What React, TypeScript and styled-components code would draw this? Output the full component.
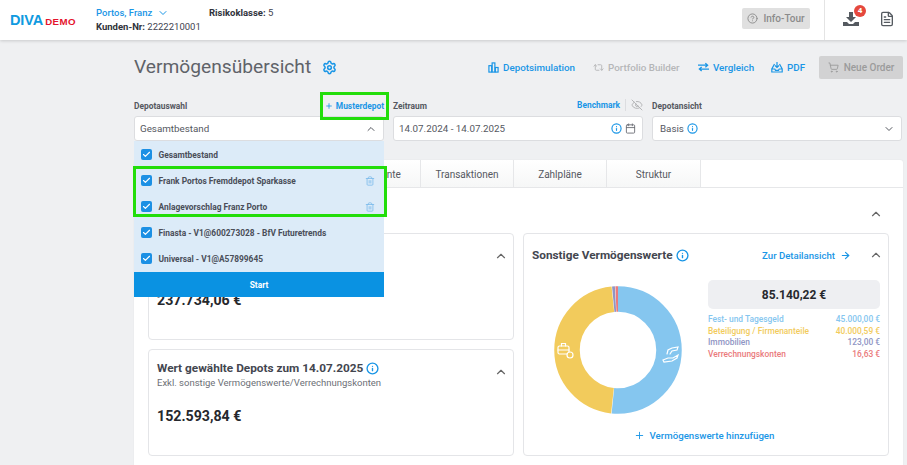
import { createGlobalStyle, styled } from "styled-components"
import { ArrowRight, Calendar, Check, ChevronDown, ChevronUp, CircleHelp, EyeOff, FileText, Info, Plus, Repeat2, Settings, ShoppingCart, Trash2 } from "lucide-react"

const blue = "#1a96e6"
const green = "#22dd0a"

const Global = createGlobalStyle`
  html, body { margin: 0; padding: 0; height: 100%; overflow: hidden; background: #eff0f2; }
  body { font-family: Roboto, "Liberation Sans", sans-serif; color: #3f4350; }
  * { box-sizing: border-box; }
`

const Page = styled.div`
  width: 907px;
  height: 465px;
  overflow: hidden;
`

const Header = styled.header`
  height: 40px;
  background: #fff;
  box-shadow: 0 1px 3px rgba(0, 0, 0, 0.16);
  display: flex;
  align-items: stretch;
  padding-left: 10px;
`

const Logo = styled.div`
  width: 86px;
  display: flex;
  align-items: baseline;
  padding-top: 12px;
  font-family: "Liberation Sans", sans-serif;
  font-weight: 700;
`

const LogoBlue = styled.span`
  color: #0f9ae0;
  font-size: 14.5px;
  letter-spacing: -0.1px;
`

const LogoRed = styled.span`
  color: #e4132c;
  font-size: 9.7px;
  letter-spacing: 0.4px;
  margin-left: 2px;
`

const Client = styled.div`
  width: 113px;
  padding-top: 6px;
  font-size: 9.5px;
  line-height: 13.5px;
  white-space: nowrap;
`

const ClientName = styled.div`
  display: flex;
  align-items: center;
  gap: 5px;
  color: ${blue};
  font-weight: 500;
`

const Strong = styled.span`
  font-weight: 700;
  color: #30333b;
`

const Risk = styled.div`
  padding-top: 6px;
  font-size: 9.5px;
  line-height: 13.5px;
`

const HeaderRight = styled.div`
  margin-left: auto;
  display: flex;
  align-items: stretch;
`

const TourButton = styled.div`
  align-self: center;
  margin: -3px 14px 0 0;
  width: 68px;
  height: 21px;
  background: #e0e0e0;
  border-radius: 2px;
  display: flex;
  align-items: center;
  justify-content: center;
  gap: 5px;
  color: #8b8b8b;
  font-size: 10px;
  font-weight: 500;
`

const HeaderIcons = styled.div`
  width: 83px;
  border-left: 1px solid #e4e4e4;
  display: flex;
  align-items: flex-start;
  gap: 20px;
  padding: 11px 0 0 18px;
`

const DownloadWrap = styled.div`
  position: relative;
  width: 16px;
  height: 16px;
`

const Badge = styled.span`
  position: absolute;
  top: -6px;
  left: 11px;
  width: 12px;
  height: 12px;
  border-radius: 50%;
  background: #e5483d;
  color: #fff;
  font-size: 8px;
  font-weight: 700;
  line-height: 12px;
  text-align: center;
`

const Main = styled.main`
  margin-left: 134px;
  width: 769px;
`

const TitleRow = styled.div`
  height: 50px;
  display: flex;
  align-items: center;
  padding-top: 4px;
`

const Title = styled.h1`
  margin: -2px 0 0;
  font-size: 19.2px;
  font-weight: 400;
  color: #5f6369;
`

const TitleIcon = styled.span`
  display: flex;
  margin-left: 11px;
  color: ${blue};
`

const Actions = styled.div`
  margin-left: auto;
  display: flex;
  align-items: center;
`

const Action = styled.div<{ $off?: boolean; $w: number }>`
  width: ${(p) => p.$w}px;
  display: flex;
  align-items: center;
  gap: 4px;
  color: ${(p) => (p.$off ? "#b5b6b8" : blue)};
  font-size: 9.8px;
  font-weight: 500;
  white-space: nowrap;
`

const OrderButton = styled.div`
  width: 84px;
  height: 23px;
  border-radius: 2px;
  background: #d2d2d3;
  color: #9b9b9b;
  display: flex;
  align-items: center;
  justify-content: center;
  gap: 5px;
  font-size: 10px;
  font-weight: 500;
`

const Fields = styled.div`
  display: grid;
  grid-template-columns: 250px 250px 250px;
  column-gap: 9px;
  position: relative;
  z-index: 2;
`

const Field = styled.div`
  position: relative;
`

const LabelRow = styled.div`
  height: 26px;
  padding-bottom: 5px;
  display: flex;
  align-items: flex-end;
  justify-content: space-between;
  font-size: 8.4px;
  font-weight: 700;
  color: #55585f;
`

const AddLink = styled.span`
  position: relative;
  display: flex;
  align-items: center;
  gap: 3px;
  color: ${blue};

  &::after {
    content: "";
    position: absolute;
    top: -9px;
    bottom: -9px;
    left: -5px;
    right: -5px;
    border: 3px solid ${green};
  }
`

const BenchmarkGroup = styled.span`
  display: flex;
  align-items: center;
  gap: 5px;
  color: ${blue};
`

const Divider = styled.span`
  width: 1px;
  height: 12px;
  background: #dcdde0;
`

const Input = styled.div<{ $pad?: number }>`
  height: 25px;
  background: #fff;
  border: 1px solid #dcdde0;
  border-radius: 3px;
  display: flex;
  align-items: center;
  padding: 0 6px 0 ${(p) => p.$pad ?? 5}px;
  font-size: 9.8px;
  color: #55585f;
  gap: 3px;
`

const PushRight = styled.span`
  margin-left: auto;
  display: flex;
  align-items: center;
  gap: 3px;
`

const Dropdown = styled.div`
  position: absolute;
  top: 51px;
  left: 0;
  width: 250px;
  background: #dcebf8;
`

const Highlighted = styled.div`
  position: relative;

  &::after {
    content: "";
    position: absolute;
    top: -1px;
    bottom: 2px;
    left: -1px;
    right: -3px;
    border: 3px solid ${green};
    pointer-events: none;
  }
`

const Option = styled.div`
  height: 26px;
  display: flex;
  align-items: center;
  padding: 1px 8px 0 7px;
  gap: 6.5px;
  font-size: 8.4px;
  font-weight: 700;
  color: #4a4e58;
`

const Box = styled.span`
  width: 11px;
  height: 11px;
  border-radius: 2px;
  background: #1c90e4;
  color: #fff;
  display: flex;
  align-items: center;
  justify-content: center;
`

const Trash = styled.span`
  margin-left: auto;
  margin-right: 1px;
  display: flex;
  color: #7dbcec;
`

const Start = styled.div`
  height: 25px;
  margin-top: 1px;
  background: #0a92e2;
  color: #fff;
  font-size: 8.4px;
  font-weight: 700;
  display: flex;
  align-items: center;
  justify-content: center;
`

const Panel = styled.section`
  margin-top: 19px;
  background: #fff;
  border-radius: 3px 3px 0 0;
  height: 330px;
  box-shadow: 0 0 2px rgba(0, 0, 0, 0.06);
`

const Tabs = styled.div`
  height: 28px;
  display: flex;
  border-bottom: 1px solid #e6e7e9;
`

const Tab = styled.div<{ $w: number }>`
  width: ${(p) => p.$w}px;
  padding-top: 1px;
  border-right: 1px solid #e6e7e9;
  background: linear-gradient(#fff, #f6f7f7);
  display: flex;
  align-items: center;
  justify-content: center;
  font-size: 10px;
  color: #55585f;
`

const SectionHead = styled.div`
  height: 45px;
  display: flex;
  justify-content: flex-end;
  align-items: flex-start;
  padding: 19px 20px 0 0;
  color: #666;
`

const CardGrid = styled.div`
  display: grid;
  grid-template-columns: 366px 366px;
  column-gap: 9px;
  padding: 0 14px;
`

const LeftColumn = styled.div`
  display: flex;
  flex-direction: column;
  gap: 9px;
`

const Card = styled.div<{ $h: number; $top: number }>`
  height: ${(p) => p.$h}px;
  border: 1px solid #e4e5e8;
  border-radius: 4px;
  background: #fff;
  padding: ${(p) => p.$top}px 5px 0 8px;
  position: relative;
`

const CardHead = styled.div`
  display: flex;
  align-items: center;
  justify-content: space-between;
  height: 22px;
`

const CardTitle = styled.div`
  display: flex;
  align-items: center;
  gap: 3px;
  font-size: 11.8px;
  font-weight: 700;
  color: #43464f;
  white-space: nowrap;
`

const CardSub = styled.div`
  font-size: 9.5px;
  color: #6c6f76;
  line-height: 12px;
  margin-top: -2px;
`

const Amount = styled.div`
  margin-top: 19px;
  font-size: 14.2px;
  font-weight: 700;
  color: #26282d;
`

const CardChevron = styled.span<{ $drop?: boolean }>`
  display: flex;
  color: #666;
  margin-top: ${(p) => (p.$drop ? 8 : 0)}px;
`

const HeadRight = styled.div`
  display: flex;
  align-items: center;
  gap: 18px;
`

const DetailLink = styled.span`
  display: flex;
  align-items: center;
  gap: 5px;
  color: ${blue};
  font-size: 9.6px;
  font-weight: 500;
`

const AssetBody = styled.div`
  display: flex;
  margin-top: 14px;
`

const DonutBox = styled.div`
  width: 176px;
  padding: 6px 0 0 22px;
`

const Legend = styled.div`
  flex: 1;
  margin-right: 3px;
`

const Total = styled.div`
  height: 29px;
  background: #eeeff2;
  border-radius: 5px;
  display: flex;
  align-items: center;
  justify-content: center;
  font-size: 12px;
  font-weight: 700;
  color: #26282d;
  margin-bottom: 5px;
`

const LegendRow = styled.div<{ $c: string }>`
  display: flex;
  justify-content: space-between;
  color: ${(p) => p.$c};
  font-size: 8.4px;
  font-weight: 500;
  line-height: 11.7px;
`

const AddAsset = styled.div`
  margin-top: 12px;
  padding-right: 7px;
  display: flex;
  align-items: center;
  justify-content: center;
  gap: 5px;
  color: ${blue};
  font-size: 9.7px;
  font-weight: 500;
`

const BarsIcon = () => (
  <svg width="11" height="11" viewBox="0 0 12 12" fill="none" stroke={blue} strokeWidth="1.3">
    <rect x="1" y="4" width="3" height="7" />
    <rect x="4.500" y="1" width="3" height="10" />
    <rect x="8" y="6" width="3" height="5" />
  </svg>
)

const SwapIcon = () => (
  <svg width="11" height="10" viewBox="0 0 12 10" fill="none" stroke={blue} strokeWidth="1.4">
    <path d="M0 3h10M8 .8 10.500 3 8 5.200" />
    <path d="M12 7.200H2M4 5 1.500 7.200 4 9.400" />
  </svg>
)

const PdfIcon = () => (
  <svg width="12" height="12" viewBox="0 0 12 12" fill="none" stroke={blue} strokeWidth="1.2">
    <path d="M6 1v5M4 4.500 6 6.500 8 4.500" />
    <path d="M3.500 3 .8 8v3h10.400V8L8.500 3M.8 8h3l.7 1.300h3L8.200 8h3" />
  </svg>
)

const DownloadIcon = () => (
  <svg width="16" height="16" viewBox="0 0 16 16" fill="#555a60">
    <path d="M6 1h4v5h3L8 11 3 6h3z" />
    <path d="M0 11h4l2 2h4l2-2h4v4H0z" />
  </svg>
)

// sweep angles read off the chart, the small slices are not to scale
const segments = [
  { sweep: 186, color: "#85c6ef" },
  { sweep: 168, color: "#f2cb5c" },
  { sweep: 3, color: "#8f95c4" },
  { sweep: 3, color: "#ea7a7c" },
]

const Donut = () => {
  const r = 51
  const c = 2 * Math.PI * r
  let offset = 0
  return (
    <svg width="128" height="128" viewBox="0 0 128 128">
      <g transform="rotate(-90 64 64)">
        {segments.map((s) => {
          const len = (s.sweep / 360) * c
          const el = <circle key={s.color} cx="64" cy="64" r={r} fill="none" stroke={s.color} strokeWidth="25.5" strokeDasharray={`${len - 0.4} ${c - len + 0.4}`} strokeDashoffset={-offset} />
          offset += len
          return el
        })}
      </g>
      <g fill="none" stroke="#fff" strokeWidth="1.2" strokeLinecap="round">
        <path d="M113 68l1-4 4-2 6-1-1 3-5 1-2 3" />
        <path d="M109 74l5-2 5 0 5-3-1 3-5 3-8 1z" />
        <rect x="4" y="60" width="11" height="8" rx="1.500" />
        <path d="M7.500 60v-2.500h4V60M4 64h11" />
        <circle cx="16" cy="69" r="3" fill="#f2cb5c" />
      </g>
    </svg>
  )
}

const depots = [
  { name: "Frank Portos Fremddepot Sparkasse" },
  { name: "Anlagevorschlag Franz Porto" },
]

const DepotOption = ({ name, removable }: { name: string; removable?: boolean }) => (
  <Option>
    <Box>
      <Check size={9} strokeWidth={3} />
    </Box>
    {name}
    {removable && (
      <Trash>
        <Trash2 size={10} />
      </Trash>
    )}
  </Option>
)

const App = () => {
  return (
    <Page>
      <Global />
      <Header>
        <Logo>
          <LogoBlue>DIVA</LogoBlue>
          <LogoRed>DEMO</LogoRed>
        </Logo>
        <Client>
          <ClientName>
            Portos, Franz <ChevronDown size={12} />
          </ClientName>
          <div>
            <Strong>Kunden-Nr:</Strong> 2222210001
          </div>
        </Client>
        <Risk>
          <Strong>Risikoklasse:</Strong> 5
        </Risk>
        <HeaderRight>
          <TourButton>
            <CircleHelp size={11} />
            Info-Tour
          </TourButton>
          <HeaderIcons>
            <DownloadWrap>
              <DownloadIcon />
              <Badge>4</Badge>
            </DownloadWrap>
            <FileText size={16} color="#555a60" />
          </HeaderIcons>
        </HeaderRight>
      </Header>
      <Main>
        <TitleRow>
          <Title>Vermögensübersicht</Title>
          <TitleIcon>
            <Settings size={15} strokeWidth={2.4} />
          </TitleIcon>
          <Actions>
            <Action $w={105}>
              <BarsIcon />
              Depotsimulation
            </Action>
            <Action $off $w={105}>
              <Repeat2 size={11} />
              Portfolio Builder
            </Action>
            <Action $w={73}>
              <SwapIcon />
              Vergleich
            </Action>
            <Action $w={48}>
              <PdfIcon />
              PDF
            </Action>
            <OrderButton>
              <ShoppingCart size={11} />
              Neue Order
            </OrderButton>
          </Actions>
        </TitleRow>
        <Fields>
          <Field>
            <LabelRow>
              Depotauswahl
              <AddLink>
                <Plus size={8} strokeWidth={2.5} />
                Musterdepot
              </AddLink>
            </LabelRow>
            <Input>
              Gesamtbestand
              <PushRight>
                <ChevronUp size={12} />
              </PushRight>
            </Input>
            <Dropdown>
              <DepotOption name="Gesamtbestand" />
              <Highlighted>
                {depots.map((d) => (
                  <DepotOption key={d.name} name={d.name} removable />
                ))}
              </Highlighted>
              <DepotOption name="Finasta - V1@600273028 - BfV Futuretrends" />
              <DepotOption name="Universal - V1@A57899645" />
              <Start>Start</Start>
            </Dropdown>
          </Field>
          <Field>
            <LabelRow>
              Zeitraum
              <BenchmarkGroup>
                Benchmark
                <Divider />
                <EyeOff size={12} color="#b5b6b8" />
              </BenchmarkGroup>
            </LabelRow>
            <Input>
              14.07.2024 - 14.07.2025
              <PushRight>
                <Info size={11} color={blue} strokeWidth={2.5} />
                <Calendar size={11} color="#6c6f76" />
              </PushRight>
            </Input>
          </Field>
          <Field>
            <LabelRow>Depotansicht</LabelRow>
            <Input $pad={7}>
              Basis
              <Info size={11} color={blue} strokeWidth={2.5} />
              <PushRight>
                <ChevronDown size={12} />
              </PushRight>
            </Input>
          </Field>
        </Fields>
        <Panel>
          <Tabs>
            <Tab $w={194}>Übersicht</Tab>
            <Tab $w={93}>Instrumente</Tab>
            <Tab $w={93}>Transaktionen</Tab>
            <Tab $w={93}>Zahlpläne</Tab>
            <Tab $w={94}>Struktur</Tab>
          </Tabs>
          <SectionHead>
            <ChevronUp size={14} />
          </SectionHead>
          <CardGrid>
            <LeftColumn>
              <Card $h={107} $top={7}>
                <CardHead>
                  <CardTitle>
                    Gesamtvermögen <Info size={13} color={blue} strokeWidth={2.5} />
                  </CardTitle>
                  <CardChevron $drop>
                    <ChevronUp size={14} />
                  </CardChevron>
                </CardHead>
                <CardSub>Inkl. sonstige Vermögenswerte/Verrechnungskonten</CardSub>
                <Amount>237.734,06 €</Amount>
              </Card>
              <Card $h={107} $top={7}>
                <CardHead>
                  <CardTitle>
                    Wert gewählte Depots zum 14.07.2025 <Info size={13} color={blue} strokeWidth={2.5} />
                  </CardTitle>
                  <CardChevron $drop>
                    <ChevronUp size={14} />
                  </CardChevron>
                </CardHead>
                <CardSub>Exkl. sonstige Vermögenswerte/Verrechnungskonten</CardSub>
                <Amount>152.593,84 €</Amount>
              </Card>
            </LeftColumn>
            <Card $h={223} $top={10}>
              <CardHead>
                <CardTitle>
                  Sonstige Vermögenswerte <Info size={13} color={blue} strokeWidth={2.5} />
                </CardTitle>
                <HeadRight>
                  <DetailLink>
                    Zur Detailansicht <ArrowRight size={11} strokeWidth={2.5} />
                  </DetailLink>
                  <CardChevron>
                    <ChevronUp size={14} />
                  </CardChevron>
                </HeadRight>
              </CardHead>
              <AssetBody>
                <DonutBox>
                  <Donut />
                </DonutBox>
                <Legend>
                  <Total>85.140,22 €</Total>
                  <LegendRow $c="#85c6ef">
                    <span>Fest- und Tagesgeld</span>
                    <span>45.000,00 €</span>
                  </LegendRow>
                  <LegendRow $c="#f2cb5c">
                    <span>Beteiligung / Firmenanteile</span>
                    <span>40.000,59 €</span>
                  </LegendRow>
                  <LegendRow $c="#8f95c4">
                    <span>Immobilien</span>
                    <span>123,00 €</span>
                  </LegendRow>
                  <LegendRow $c="#ea7a7c">
                    <span>Verrechnungskonten</span>
                    <span>16,63 €</span>
                  </LegendRow>
                </Legend>
              </AssetBody>
              <AddAsset>
                <Plus size={11} />
                Vermögenswerte hinzufügen
              </AddAsset>
            </Card>
          </CardGrid>
        </Panel>
      </Main>
    </Page>
  )
}

export default App
